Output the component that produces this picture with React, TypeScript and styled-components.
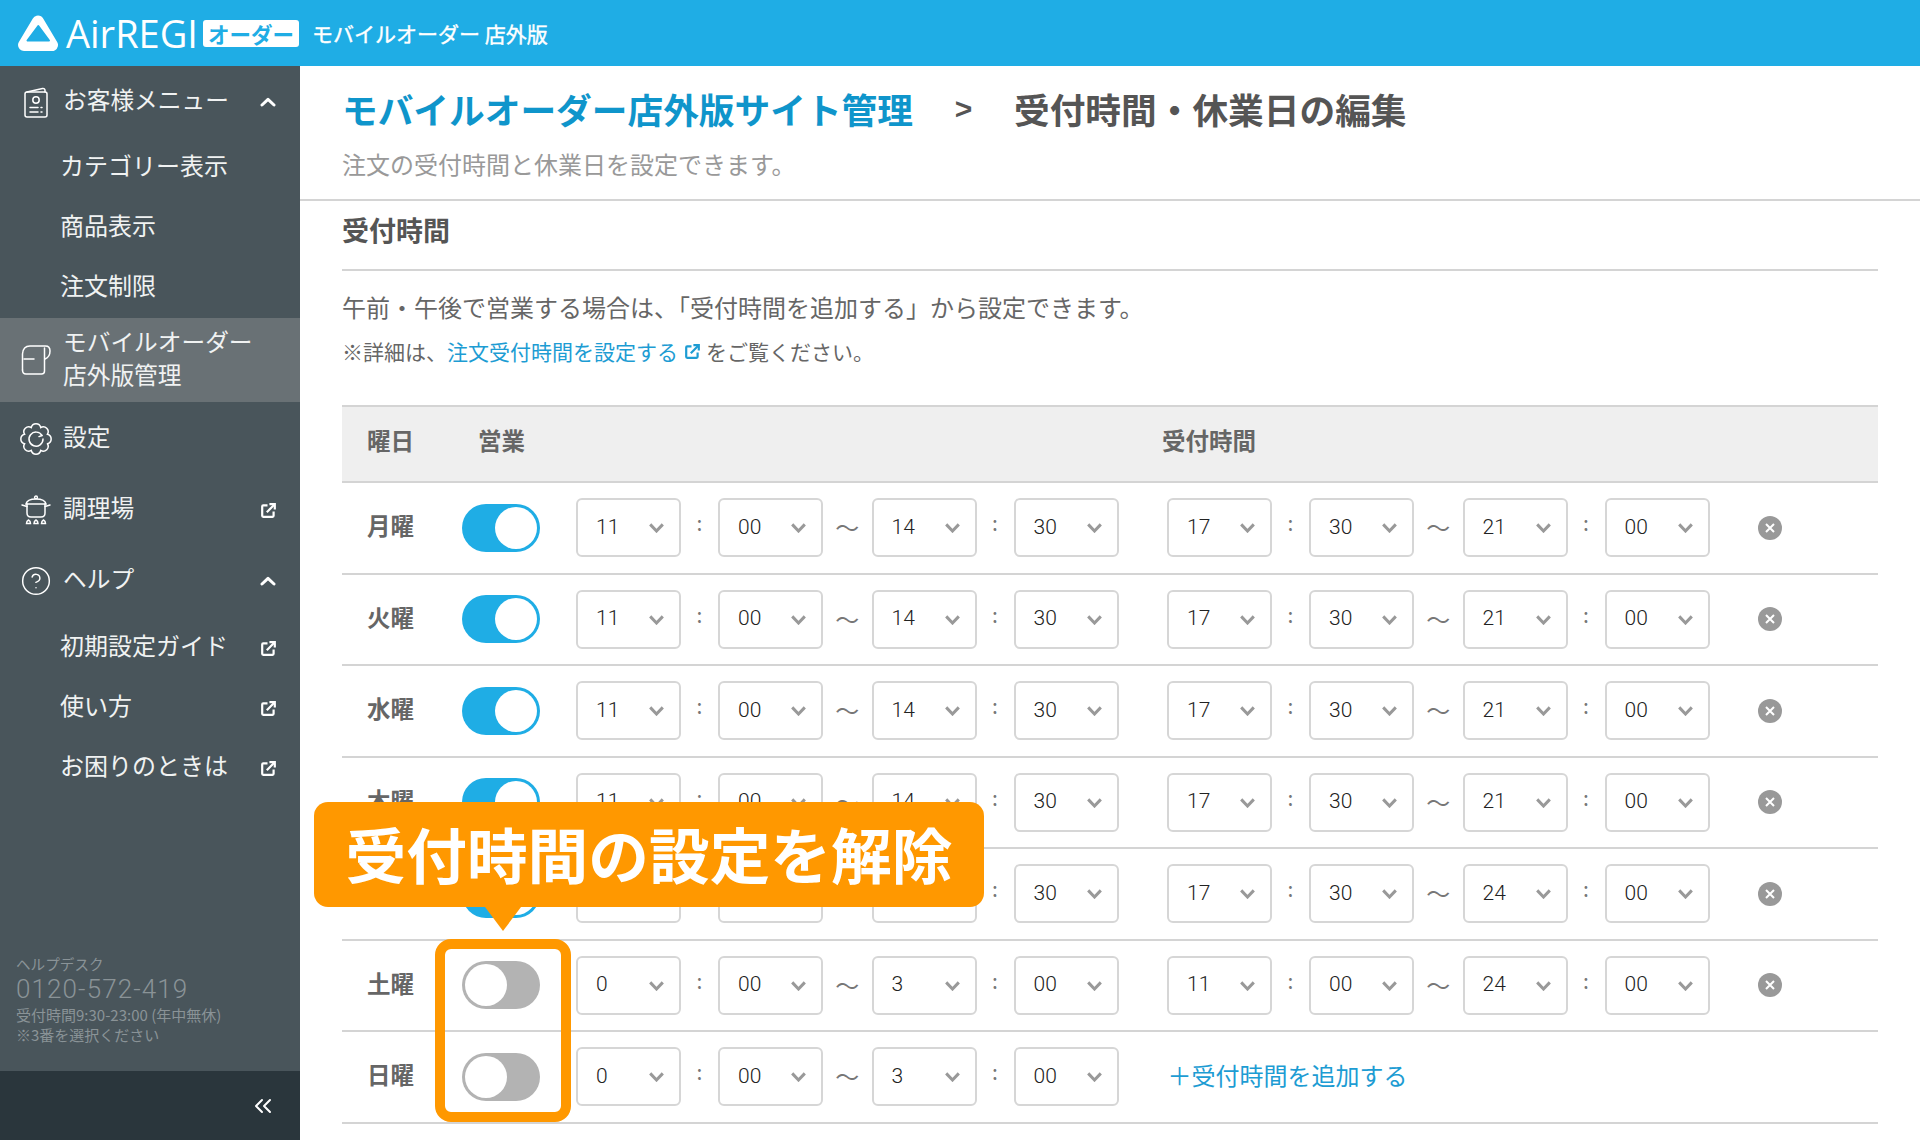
import React from "react";
import styled, { createGlobalStyle } from "styled-components";
import { CircleHelp } from "lucide-react";

const GlobalStyle = createGlobalStyle`
  html, body {
    margin: 0;
    padding: 0;
    height: 1140px;
    overflow: hidden;
    background: #ffffff;
    font-family: "Noto Sans CJK JP", "Noto Sans", sans-serif;
  }
  * {
    box-sizing: border-box;
  }
`;

const gearPath = (() => {
  const point = (deg: number) => {
    const rad = (deg * Math.PI) / 180;
    return `${(16 + 12.4 * Math.cos(rad)).toFixed(2)} ${(16 + 12.4 * Math.sin(rad)).toFixed(2)}`;
  };
  let d = `M${point(22.5)}`;
  for (let i = 1; i <= 8; i++) {
    d += ` A4.9 4.9 0 0 1 ${point(22.5 + i * 45)}`;
  }
  return d;
})();

const ExternalIcon = ({ color = "#ffffff" }: { color?: string }) => (
  <svg width="15" height="15" viewBox="0 0 15 15" fill="none" stroke={color} strokeWidth="2.2">
    <path d="M6.5 2.4H2.2a1 1 0 0 0-1 1v9.4a1 1 0 0 0 1 1h9.4a1 1 0 0 0 1-1V8.6" />
    <path d="M5.8 9.2 13.2 1.8" />
    <path d="M8.4 1.2H13.8V6.6" />
  </svg>
);

const ChevronUp = () => (
  <svg width="16" height="10" viewBox="0 0 16 10" fill="none" stroke="#ffffff" strokeWidth="3" strokeLinecap="round" strokeLinejoin="round">
    <path d="M2 8 8 2.4 14 8" />
  </svg>
);

const MenuIcon = () => (
  <svg width="24" height="31" viewBox="0 0 24 31" fill="none" stroke="#ffffff" strokeWidth="1.5" strokeLinecap="round">
    <rect x="1" y="5" width="22" height="25" rx="2" />
    <path d="M3 5 18.5 1.6Q21 1.2 21 3.4V5" />
    <circle cx="12" cy="13" r="3.2" />
    <path d="M6 20.5H14M17 20.5H18M6 25H14M17 25H18" />
  </svg>
);

const MobileIcon = () => (
  <svg width="30" height="30" viewBox="0 0 30 30" fill="none" stroke="#ffffff" strokeWidth="1.5" strokeLinecap="round">
    <path d="M1.5 25V9Q2 1 9 1H24.5Q29 1 29 6Q29 12 24 14" />
    <path d="M23.5 3V26Q23.5 29 20.5 29H5Q1.5 29 1.5 25" />
    <path d="M3 14H13" />
  </svg>
);

const GearIcon = () => (
  <svg width="32" height="32" viewBox="0 0 32 32" fill="none" stroke="#ffffff" strokeWidth="1.5" strokeLinecap="round">
    <path d={gearPath} />
    <path d="M22 12.5A7 7 0 1 0 23 16" />
    <path d="M19 13.6 22 12.5" />
  </svg>
);

const PotIcon = () => (
  <svg width="30" height="30" viewBox="0 0 30 30" fill="none" stroke="#ffffff" strokeWidth="1.5" strokeLinecap="round">
    <circle cx="15" cy="2.4" r="1.4" />
    <path d="M5 9Q6 4 15 4Q24 4 25 9Z" />
    <path d="M6 9V18Q6 22 10 22H20Q24 22 24 18V9" />
    <path d="M1 10 6 11.5M29 10 24 11.5" />
    <path d="M5.5 28.5Q5.5 26 7.5 25Q9.5 26 9.5 28.5ZM13 28.5Q13 26 15 25Q17 26 17 28.5ZM20.5 28.5Q20.5 26 22.5 25Q24.5 26 24.5 28.5Z" />
  </svg>
);

const SelectChevron = () => (
  <svg width="15" height="10" viewBox="0 0 15 10" fill="none" stroke="#999999" strokeWidth="3">
    <path d="M1.2 1.4 7.5 8 13.8 1.4" />
  </svg>
);

const RemoveIcon = () => (
  <svg width="24" height="24" viewBox="0 0 24 24" fill="none">
    <circle cx="12" cy="12" r="12" fill="#999999" />
    <path d="M8 8 16 16M16 8 8 16" stroke="#ffffff" strokeWidth="2" />
  </svg>
);

type Range = [string, string, string, string];

const days: { label: string; on: boolean; first: Range; second?: Range }[] = [
  { label: "月曜", on: true, first: ["11", "00", "14", "30"], second: ["17", "30", "21", "00"] },
  { label: "火曜", on: true, first: ["11", "00", "14", "30"], second: ["17", "30", "21", "00"] },
  { label: "水曜", on: true, first: ["11", "00", "14", "30"], second: ["17", "30", "21", "00"] },
  { label: "木曜", on: true, first: ["11", "00", "14", "30"], second: ["17", "30", "21", "00"] },
  { label: "金曜", on: true, first: ["11", "00", "14", "30"], second: ["17", "30", "24", "00"] },
  { label: "土曜", on: false, first: ["0", "00", "3", "00"], second: ["11", "00", "24", "00"] },
  { label: "日曜", on: false, first: ["0", "00", "3", "00"] },
];

const TimeRange = ({ values }: { values: Range }) => (
  <RangeGroup>
    <TimeSelect><span>{values[0]}</span><SelectChevron /></TimeSelect>
    <Colon>:</Colon>
    <TimeSelect><span>{values[1]}</span><SelectChevron /></TimeSelect>
    <Tilde>〜</Tilde>
    <TimeSelect><span>{values[2]}</span><SelectChevron /></TimeSelect>
    <Colon>:</Colon>
    <TimeSelect><span>{values[3]}</span><SelectChevron /></TimeSelect>
  </RangeGroup>
);

export default function App() {
  return (
    <>
      <GlobalStyle />
      <Page>
        <TopBar>
          <LogoMark width="40" height="36" viewBox="0 0 40 36">
            <path d="M20 6.5 34 30H6Z" fill="#ffffff" stroke="#ffffff" strokeWidth="12" strokeLinejoin="round" />
            <path d="M20.3 11 9.5 25.5H31Z" fill="#1fade5" stroke="#1fade5" strokeWidth="2" strokeLinejoin="round" />
          </LogoMark>
          <LogoText>AirREGI</LogoText>
          <LogoBadge>オーダー</LogoBadge>
          <TopTitle>モバイルオーダー 店外版</TopTitle>
        </TopBar>
        <Body>
          <Sidebar>
            <NavRow $height={72}>
              <NavIcon><MenuIcon /></NavIcon>
              <NavLabel>お客様メニュー</NavLabel>
              <NavEnd><ChevronUp /></NavEnd>
            </NavRow>
            <SubRow><SubLabel>カテゴリー表示</SubLabel></SubRow>
            <SubRow><SubLabel>商品表示</SubLabel></SubRow>
            <SubRow><SubLabel>注文制限</SubLabel></SubRow>
            <NavRow $height={84} $active>
              <NavIcon><MobileIcon /></NavIcon>
              <NavLabel>モバイルオーダー<br />店外版管理</NavLabel>
            </NavRow>
            <NavRow $height={74}>
              <NavIcon><GearIcon /></NavIcon>
              <NavLabel>設定</NavLabel>
            </NavRow>
            <NavRow $height={68}>
              <NavIcon><PotIcon /></NavIcon>
              <NavLabel>調理場</NavLabel>
              <NavEnd><ExternalIcon /></NavEnd>
            </NavRow>
            <NavRow $height={74}>
              <NavIcon><CircleHelp size={36} strokeWidth={1.1} color="#ffffff" /></NavIcon>
              <NavLabel>ヘルプ</NavLabel>
              <NavEnd><ChevronUp /></NavEnd>
            </NavRow>
            <SubRow><SubLabel>初期設定ガイド</SubLabel><NavEnd><ExternalIcon /></NavEnd></SubRow>
            <SubRow><SubLabel>使い方</SubLabel><NavEnd><ExternalIcon /></NavEnd></SubRow>
            <SubRow><SubLabel>お困りのときは</SubLabel><NavEnd><ExternalIcon /></NavEnd></SubRow>
            <HelpDesk>
              <HelpTitle>ヘルプデスク</HelpTitle>
              <HelpPhone>0120-572-419</HelpPhone>
              <HelpCaption>受付時間9:30-23:00 (年中無休)</HelpCaption>
              <HelpCaption>※3番を選択ください</HelpCaption>
            </HelpDesk>
            <SidebarFooter>
              <svg width="18" height="16" viewBox="0 0 18 16" fill="none" stroke="#ffffff" strokeWidth="2" strokeLinecap="round" strokeLinejoin="round">
                <path d="M8 2 2 8 8 14M16 2 10 8 16 14" />
              </svg>
            </SidebarFooter>
          </Sidebar>
          <Main>
            <TitleBlock>
              <Title>
                <TitleLink>モバイルオーダー店外版サイト管理</TitleLink>
                <TitleSep>&gt;</TitleSep>
                <span>受付時間・休業日の編集</span>
              </Title>
              <Subtitle>注文の受付時間と休業日を設定できます。</Subtitle>
            </TitleBlock>
            <Content>
              <SectionTitle>受付時間</SectionTitle>
              <Lead>午前・午後で営業する場合は、「受付時間を追加する」から設定できます。</Lead>
              <Note>
                ※詳細は、<NoteLink>注文受付時間を設定する</NoteLink>
                <NoteIcon><ExternalIcon color="#1d9cd3" /></NoteIcon>
                をご覧ください。
              </Note>
              <TableWrap>
                <TableHead>
                  <HeadDay>曜日</HeadDay>
                  <HeadOpen>営業</HeadOpen>
                  <HeadTime>受付時間</HeadTime>
                </TableHead>
                {days.map((day) => (
                  <Row key={day.label}>
                    <DayLabel>{day.label}</DayLabel>
                    <Toggle $on={day.on}><Knob /></Toggle>
                    <TimeRange values={day.first} />
                    {day.second ? (
                      <>
                        <TimeRange values={day.second} />
                        <RemoveButton><RemoveIcon /></RemoveButton>
                      </>
                    ) : (
                      <AddLink>＋受付時間を追加する</AddLink>
                    )}
                  </Row>
                ))}
                <Callout><CalloutText>受付時間の設定を解除</CalloutText></Callout>
                <Highlight />
              </TableWrap>
            </Content>
          </Main>
        </Body>
      </Page>
    </>
  );
}

const Page = styled.div`
  width: 1920px;
  height: 1140px;
  display: flex;
  flex-direction: column;
  overflow: hidden;
`;

const TopBar = styled.header`
  height: 66px;
  flex: none;
  display: flex;
  align-items: center;
  padding-left: 18px;
  background: #1fade5;
  color: #ffffff;
`;

const LogoMark = styled.svg`
  flex: none;
`;

const LogoText = styled.span`
  margin-left: 8px;
  width: 136px;
  font-family: "Open Sans", sans-serif;
  font-size: 38px;
  line-height: 40px;
`;

const LogoBadge = styled.span`
  margin-left: 1px;
  width: 96px;
  height: 27px;
  border-radius: 3px;
  background: #ffffff;
  color: #1fade5;
  font-size: 21.5px;
  font-weight: 700;
  line-height: 27px;
  text-align: center;
`;

const TopTitle = styled.span`
  margin-left: 13px;
  font-size: 21px;
  line-height: 30px;
  -webkit-text-stroke: 0.4px #ffffff;
`;

const Body = styled.div`
  flex: 1;
  display: flex;
  min-height: 0;
`;

const Sidebar = styled.nav`
  width: 300px;
  flex: none;
  display: flex;
  flex-direction: column;
  background: #49555b;
  color: #f0f2f2;
`;

const NavRow = styled.div<{ $height: number; $active?: boolean }>`
  height: ${(p) => p.$height}px;
  flex: none;
  display: flex;
  align-items: center;
  padding: 0 24px 0 20px;
  background: ${(p) => (p.$active ? "#697175" : "transparent")};
`;

const NavIcon = styled.span`
  width: 32px;
  height: 36px;
  flex: none;
  display: flex;
  align-items: center;
  justify-content: center;
`;

const NavLabel = styled.span`
  margin: 0 0 5px 11px;
  font-size: 23.7px;
  line-height: 33px;
`;

const NavEnd = styled.span`
  margin-left: auto;
  display: flex;
  align-items: center;
`;

const SubRow = styled.div`
  height: 60px;
  flex: none;
  display: flex;
  align-items: center;
  padding: 0 24px 0 60px;
`;

const SubLabel = styled.span`
  margin-bottom: 8px;
  font-size: 24px;
`;

const HelpDesk = styled.div`
  margin-top: auto;
  padding: 0 0 26px 16px;
  color: #8a9397;
`;

const HelpTitle = styled.div`
  font-size: 14.6px;
  line-height: 18px;
`;

const HelpCaption = styled.div`
  font-size: 15px;
  line-height: 20px;
`;

const HelpPhone = styled.div`
  font-family: "Roboto", sans-serif;
  font-size: 26px;
  font-weight: 300;
  line-height: 32px;
  letter-spacing: 1.1px;
`;

const SidebarFooter = styled.div`
  height: 69px;
  flex: none;
  display: flex;
  align-items: center;
  justify-content: flex-end;
  padding-right: 28px;
  background: #2a363c;
`;

const Main = styled.main`
  flex: 1;
  min-width: 0;
  display: flex;
  flex-direction: column;
`;

const TitleBlock = styled.div`
  height: 135px;
  flex: none;
  padding: 18.5px 42px 0;
  border-bottom: 2px solid #d4d4d4;
`;

const Title = styled.h1`
  margin: 0;
  display: flex;
  color: #555555;
  font-size: 35.7px;
  font-weight: 700;
  line-height: 48px;
`;

const TitleLink = styled.span`
  color: #0f95cb;
`;

const TitleSep = styled.span`
  width: 101px;
  text-align: center;
  font-family: "Liberation Sans", sans-serif;
  font-size: 30px;
`;

const Subtitle = styled.p`
  margin: 14px 0 0;
  color: #999999;
  font-size: 24px;
  line-height: 34px;
`;

const Content = styled.div`
  padding: 0 42px;
`;

const SectionTitle = styled.h2`
  margin: 0;
  height: 70px;
  padding-top: 9.5px;
  border-bottom: 2px solid #d4d4d4;
  color: #555555;
  font-size: 27px;
  font-weight: 700;
  line-height: 38px;
`;

const Lead = styled.p`
  margin: 17.5px 0 0;
  color: #666666;
  font-size: 24px;
  line-height: 36px;
`;

const Note = styled.p`
  margin: 9px 0 0;
  display: flex;
  align-items: center;
  color: #666666;
  font-size: 21px;
  line-height: 34px;
`;

const NoteLink = styled.span`
  color: #1d9cd3;
`;

const NoteIcon = styled.span`
  display: flex;
  margin: 2px 6px 0 7px;
`;

const TableWrap = styled.div`
  position: relative;
  margin-top: 37.5px;
`;

const TableHead = styled.div`
  height: 78px;
  display: flex;
  align-items: center;
  border-top: 2px solid #d4d4d4;
  border-bottom: 2px solid #d4d4d4;
  background: #efefef;
  color: #666666;
  font-size: 23.5px;
  font-weight: 700;
  span {
    margin-bottom: 8px;
  }
`;

const HeadDay = styled.span`
  margin-left: 25px;
  width: 111px;
`;

const HeadOpen = styled.span`
  width: 684px;
`;

const HeadTime = styled.span``;

const Row = styled.div`
  height: 91.5px;
  display: flex;
  align-items: center;
  border-bottom: 2px solid #d4d4d4;
`;

const DayLabel = styled.span`
  width: 120px;
  margin-bottom: 5px;
  padding-left: 25px;
  flex: none;
  color: #666666;
  font-size: 23.5px;
  font-weight: 700;
`;

const Toggle = styled.span<{ $on: boolean }>`
  width: 78px;
  height: 48px;
  flex: none;
  display: flex;
  align-items: center;
  justify-content: ${(p) => (p.$on ? "flex-end" : "flex-start")};
  padding: 0 3px;
  border-radius: 24px;
  background: ${(p) => (p.$on ? "#1fade5" : "#b3b3b3")};
`;

const Knob = styled.span`
  width: 42px;
  height: 42px;
  border-radius: 50%;
  background: #ffffff;
`;

const RangeGroup = styled.div`
  display: flex;
  align-items: center;
  margin-left: 36px;
  width: 542.5px;
  flex: none;
  & + & {
    margin-left: 48.5px;
  }
`;

const TimeSelect = styled.div`
  width: 105px;
  height: 59px;
  flex: none;
  display: flex;
  align-items: center;
  justify-content: space-between;
  padding: 0 15px 0 18px;
  border: 2px solid #d6d6d6;
  border-radius: 6px;
  background: #ffffff;
  color: #222222;
  font-family: "Roboto", sans-serif;
  font-size: 21px;
  font-weight: 300;
  svg {
    margin-top: 1px;
  }
  span {
    margin-top: -2px;
  }
`;

const Colon = styled.span`
  width: 37px;
  flex: none;
  margin-top: -11px;
  text-align: center;
  color: #777777;
  font-size: 21px;
`;

const Tilde = styled.span`
  width: 48.5px;
  flex: none;
  margin-top: -2px;
  text-align: center;
  color: #777777;
  font-size: 24px;
`;

const RemoveButton = styled.span`
  display: flex;
  flex: none;
  margin-left: 48px;
`;

const AddLink = styled.span`
  margin: 0 0 5px 49px;
  color: #1d9cd3;
  font-size: 24px;
`;

const Callout = styled.div`
  position: absolute;
  left: -28px;
  top: 397px;
  width: 670px;
  height: 105px;
  display: flex;
  align-items: center;
  justify-content: center;
  border-radius: 14px;
  background: #ff9800;
  &::after {
    content: "";
    position: absolute;
    left: 171px;
    top: 105px;
    border-left: 18px solid transparent;
    border-right: 18px solid transparent;
    border-top: 24px solid #ff9800;
  }
`;

const CalloutText = styled.span`
  margin-bottom: 5px;
  color: #ffffff;
  font-size: 60.7px;
  font-weight: 700;
`;

const Highlight = styled.div`
  position: absolute;
  left: 93px;
  top: 534px;
  width: 136px;
  height: 183px;
  border: 10px solid #ff9800;
  border-radius: 16px;
`;
